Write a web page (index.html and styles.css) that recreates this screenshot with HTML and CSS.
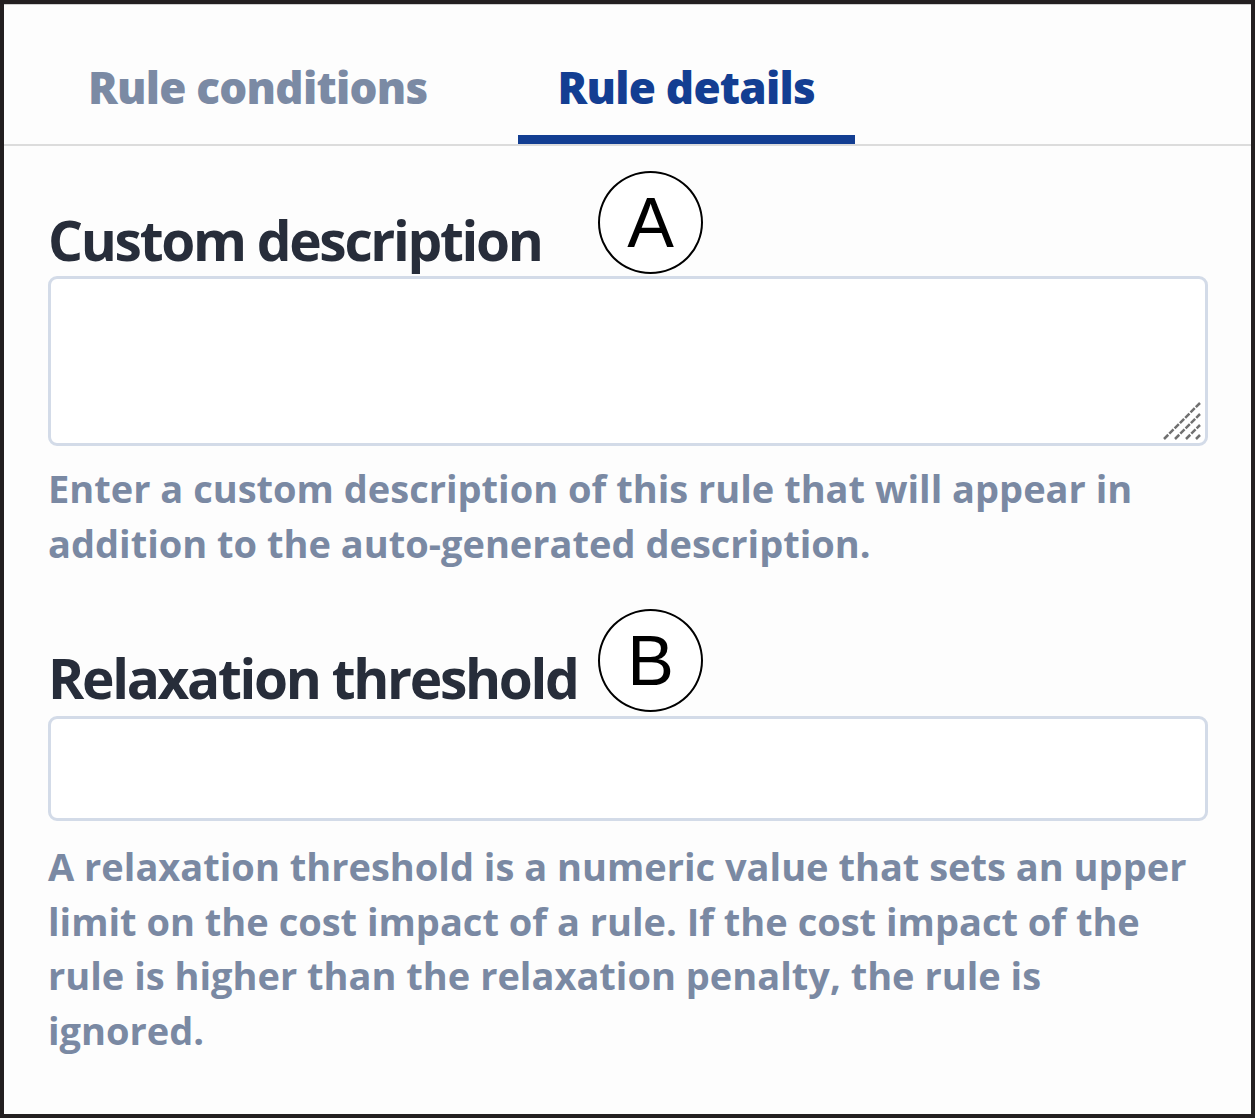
FILE: index.html
```html
<!DOCTYPE html>
<html lang="en">
<head>
    <meta charset="UTF-8">
    <meta name="viewport" content="width=device-width, initial-scale=1.0">
    <title>Rule details</title>
    <link rel="stylesheet" href="styles.css">
</head>
<body>
    <div class="panel">
        <div class="tabs">
            <div class="tab">Rule conditions</div>
            <div class="tab active">Rule details</div>
        </div>

        <div class="content">
            <div class="field">
                <label class="field-label" for="customDescription">Custom description</label>
                <div class="textarea-wrap">
                    <textarea id="customDescription" class="textarea"></textarea>
                    <svg class="grip" width="40" height="40" viewBox="0 0 40 40">
                        <line x1="2" y1="38" x2="38" y2="2" />
                        <line x1="13" y1="38" x2="38" y2="13" />
                        <line x1="24" y1="38" x2="38" y2="24" />
                        <line x1="34" y1="38" x2="38" y2="34" />
                    </svg>
                </div>
                <p class="help">Enter a custom description of this rule that will appear in addition to the auto-generated description.</p>
                <span class="callout callout-a">A</span>
            </div>

            <div class="field field-threshold">
                <label class="field-label" for="relaxationThreshold">Relaxation threshold</label>
                <input id="relaxationThreshold" class="input" type="text">
                <p class="help">A relaxation threshold is a numeric value that sets an upper limit on the cost impact of a rule. If the cost impact of the rule is higher than the relaxation penalty, the rule is ignored.</p>
                <span class="callout callout-b">B</span>
            </div>
        </div>
    </div>
</body>
</html>
```

FILE: styles.css
```css
body {
    margin: 0;
    padding: 0;
    font-family: "Open Sans", "Noto Sans", Arial, sans-serif;
    background-color: #fdfdfd;
}
.panel {
    position: relative;
    height: 1118px;
    box-sizing: border-box;
    border: 4px solid #231f20;
    background-color: #fdfdfd;
    box-shadow: inset 0 1px 0 #cfcfcf;
}
.tabs {
    display: flex;
    gap: 50px;
    padding-left: 44px;
    border-bottom: 2px solid #dcdcdc;
}
.tab {
    padding: 59px 40px 24px;
    font-size: 44px;
    line-height: 48px;
    font-weight: 800;
    letter-spacing: -0.75px;
    color: #7b8aa4;
    border-bottom: 9px solid transparent;
}
.tab.active {
    color: #133e92;
    border-bottom-color: #133e92;
}
.content {
    padding: 0 43px 0 44px;
}
.field {
    position: relative;
}
.field-label {
    display: block;
    margin-top: 62px;
    font-size: 55px;
    line-height: 64px;
    font-weight: 700;
    letter-spacing: -2.3px;
    color: #272d3a;
}
.textarea-wrap {
    position: relative;
    margin-top: 4px;
}
.textarea {
    display: block;
    width: 100%;
    height: 170px;
    box-sizing: border-box;
    border: 3px solid #d3dbe8;
    border-radius: 9px;
    background-color: #fff;
    resize: none;
    font-family: inherit;
}
.grip {
    position: absolute;
    right: 6px;
    bottom: 5px;
}
.grip line {
    stroke: #707070;
    stroke-width: 2.5;
    stroke-dasharray: 6 1.5;
}
.input {
    display: block;
    width: 100%;
    height: 105px;
    margin-top: 6px;
    box-sizing: border-box;
    border: 3px solid #d3dbe8;
    border-radius: 9px;
    background-color: #fff;
    font-family: inherit;
}
.help {
    max-width: 1145px;
    margin: 15px 0 0;
    font-size: 38px;
    line-height: 55px;
    font-weight: 700;
    color: #7a89a3;
}
.field-threshold .field-label {
    margin-top: 75px;
}
.field-threshold .help {
    margin-top: 18px;
    line-height: 54.5px;
}
.callout {
    position: absolute;
    top: -37px;
    left: 550px;
    width: 105px;
    height: 103px;
    box-sizing: border-box;
    border: 2px solid #000;
    border-radius: 50%;
    background-color: #fff;
    display: flex;
    align-items: center;
    justify-content: center;
    font-family: "Liberation Sans", Arial, sans-serif;
    font-size: 70px;
    color: #000;
}
```
